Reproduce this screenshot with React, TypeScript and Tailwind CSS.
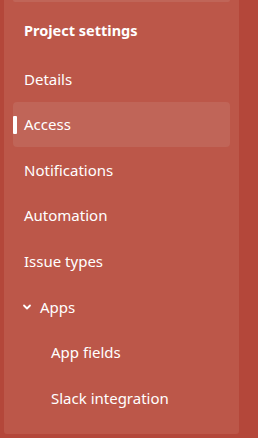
import React from "react";

const font = { fontFamily: '"Noto Sans", "Open Sans", sans-serif' };

function Item({ label, active = false, indent = false }: { label: string; active?: boolean; indent?: boolean }) {
  return (
    <div
      className={`relative flex items-center shrink-0 h-[45.6px] rounded-[4px] ${active ? "bg-[#c06558]" : ""} ${indent ? "pl-[38px]" : "pl-[11px]"}`}
    >
      {active && <div className="absolute left-0 top-[14px] w-[4px] h-[18px] bg-white rounded-[1px]" />}
      <span className="text-[15px] text-white">{label}</span>
    </div>
  );
}

export default function App() {
  return (
    <div className="w-[258px] h-[438px] bg-[#b4473a] flex pl-[4px] pr-[19px] pb-[4px]" style={font}>
      <div className="flex-1 bg-[#bc5749] rounded-b-[3px] px-[9px] flex flex-col">
        <div className="h-[2px] shrink-0 bg-[#c06558] rounded-b-[4px]" />
        <div className="flex items-center shrink-0 h-[50px] pl-[11px] mt-[4px]">
          <span className="text-[14.5px] font-bold text-white">Project settings</span>
        </div>
        <Item label="Details" />
        <Item label="Access" active />
        <Item label="Notifications" />
        <Item label="Automation" />
        <Item label="Issue types" />
        <div className="flex items-center shrink-0 h-[45.6px] pl-[9px]">
          <svg width="10" height="10" viewBox="0 0 10 10" className="mr-[8px]">
            <path d="M2 3.5 L5 6.5 L8 3.5" stroke="white" strokeWidth="1.8" fill="none" strokeLinecap="round" strokeLinejoin="round" />
          </svg>
          <span className="text-[15px] text-white">Apps</span>
        </div>
        <Item label="App fields" indent />
        <Item label="Slack integration" indent />
      </div>
    </div>
  );
}
